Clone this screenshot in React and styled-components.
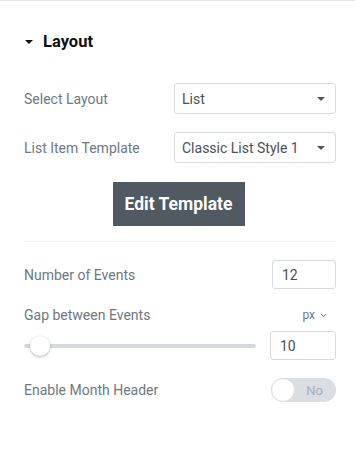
import React from "react";
import styled, { createGlobalStyle } from "styled-components";

const GlobalStyle = createGlobalStyle`
  body {
    margin: 0;
    background: #fff;
    font-family: Roboto, "Liberation Sans", Arial, sans-serif;
  }
`;

const Panel = styled.div`
  width: 355px;
  height: 454px;
  box-sizing: border-box;
  border-top: 1px solid #e4e6e8;
  padding: 0 19px 0 24px;
`;

const SectionHeader = styled.div`
  height: 81px;
  display: flex;
  align-items: center;
  gap: 10px;
  font-size: 16.5px;
  font-weight: 700;
  color: #111;
`;

const Caret = styled.span`
  width: 0;
  height: 0;
  margin-left: 1px;
  border-left: 4px solid transparent;
  border-right: 4px solid transparent;
  border-top: 4px solid #111;
`;

const Row = styled.div`
  display: flex;
  align-items: center;
  justify-content: space-between;
  height: ${(p) => p.h || 31}px;
  margin-top: ${(p) => p.mt || 0}px;
`;

const Label = styled.span`
  font-size: 14px;
  color: #6d7882;
`;

const SelectBox = styled.div`
  width: 162px;
  height: 31px;
  box-sizing: border-box;
  border: 1px solid #d5dadf;
  border-radius: 3px;
  display: flex;
  align-items: center;
  justify-content: space-between;
  padding: 0 10px 0 7px;
  font-size: 14px;
  color: #495157;
`;

const SelectArrow = styled.span`
  width: 0;
  height: 0;
  border-left: 4px solid transparent;
  border-right: 4px solid transparent;
  border-top: 4px solid #555;
`;

const ButtonWrap = styled.div`
  display: flex;
  justify-content: center;
  margin-top: 19px;
  padding-right: 3px;
`;

const EditButton = styled.button`
  width: 132px;
  height: 44px;
  border: none;
  background: #515962;
  color: #fff;
  font-family: inherit;
  font-size: 17.5px;
  font-weight: 700;
  padding: 0;
`;

const Divider = styled.hr`
  border: none;
  border-top: 1px solid #eceef0;
  margin: 15px 0 0;
`;

const NumberInput = styled.div`
  width: ${(p) => p.w || 64}px;
  height: 29px;
  box-sizing: border-box;
  border: 1px solid #d5dadf;
  border-radius: 3px;
  display: flex;
  align-items: center;
  padding-left: 9px;
  font-size: 14px;
  color: #495157;
`;

const Unit = styled.span`
  font-size: 12px;
  color: #6d7882;
  display: flex;
  align-items: center;
  gap: 5px;
  margin-right: 9px;
`;

const SliderTrack = styled.div`
  position: relative;
  width: 232px;
  height: 4px;
  border-radius: 2px;
  background: #d5dadf;
`;

const SliderThumb = styled.span`
  position: absolute;
  top: 50%;
  width: 20px;
  height: 20px;
  border-radius: 50%;
  background: #fff;
  box-shadow: 0 1px 3px rgba(0, 0, 0, 0.3);
  transform: translate(-50%, -50%);
`;

const Toggle = styled.div`
  width: 65px;
  height: 24px;
  box-sizing: border-box;
  border-radius: 12px;
  background: #dadde1;
  display: flex;
  align-items: center;
  justify-content: space-between;
  padding: 0 13px 0 0;
`;

const ToggleKnob = styled.span`
  width: 24px;
  height: 24px;
  box-sizing: border-box;
  border-radius: 50%;
  background: #fff;
  border: 1px solid #dadde1;
`;

const ToggleText = styled.span`
  font-size: 13px;
  color: #a4afb7;
`;

export default function App() {
  const gap = 10;
  return (
    <>
      <GlobalStyle />
      <Panel>
        <SectionHeader>
          <Caret />
          Layout
        </SectionHeader>

        <Row mt={1}>
          <Label>Select Layout</Label>
          <SelectBox>
            List
            <SelectArrow />
          </SelectBox>
        </Row>
        <Row mt={18}>
          <Label>List Item Template</Label>
          <SelectBox>
            Classic List Style 1
            <SelectArrow />
          </SelectBox>
        </Row>

        <ButtonWrap>
          <EditButton>Edit Template</EditButton>
        </ButtonWrap>

        <Divider />

        <Row h={29} mt={18}>
          <Label>Number of Events</Label>
          <NumberInput>12</NumberInput>
        </Row>

        <Row h={20} mt={16}>
          <Label>Gap between Events</Label>
          <Unit>
            px
            <svg width="7" height="5" viewBox="0 0 7 5">
              <path d="M1 1l2.5 2.5L6 1" fill="none" stroke="#6d7882" strokeWidth="1" />
            </svg>
          </Unit>
        </Row>

        <Row h={29} mt={6}>
          <SliderTrack>
            <SliderThumb style={{ left: `${15.5 + (gap - 10)}px` }} />
          </SliderTrack>
          <NumberInput w={66}>{gap}</NumberInput>
        </Row>

        <Row h={24} mt={18}>
          <Label>Enable Month Header</Label>
          <Toggle>
            <ToggleKnob />
            <ToggleText>No</ToggleText>
          </Toggle>
        </Row>
      </Panel>
    </>
  );
}
